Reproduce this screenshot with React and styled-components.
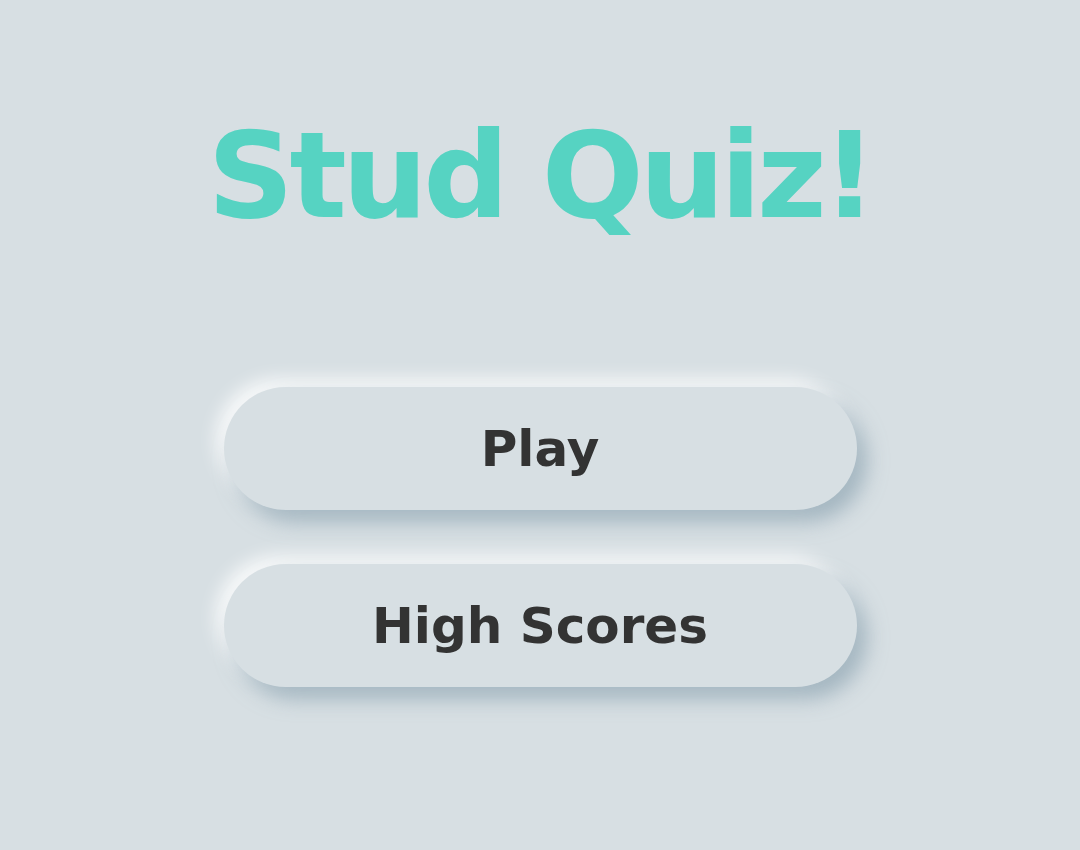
import React from "react";
import styled, { createGlobalStyle } from "styled-components";

const GlobalStyle = createGlobalStyle`
  html, body {
    margin: 0;
    padding: 0;
    background: #d7dfe3;
  }
  body {
    font-family: "DejaVu Sans", "Open Sans", sans-serif;
  }
`;

const Page = styled.div`
  min-height: 850px;
  display: flex;
  flex-direction: column;
  align-items: center;
  background: #d7dfe3;
`;

const Title = styled.h1`
  margin: 106px 0 0;
  font-size: 120px;
  line-height: 140px;
  font-weight: 700;
  color: #56d3c2;
  letter-spacing: -4.5px;
`;

const Menu = styled.div`
  margin-top: 141px;
  display: flex;
  flex-direction: column;
  gap: 54px;
`;

const MenuButton = styled.button`
  width: 633px;
  height: 123px;
  border: none;
  border-radius: 62px;
  background: #d7dfe3;
  color: #333333;
  font-family: "DejaVu Sans", "Open Sans", sans-serif;
  font-size: 50px;
  font-weight: 600;
  box-shadow: 10px 12px 20px rgba(130, 155, 170, 0.6),
    -8px -8px 18px rgba(255, 255, 255, 0.85);
  cursor: pointer;
`;

function App() {
  return (
    <Page>
      <GlobalStyle />
      <Title>Stud Quiz!</Title>
      <Menu>
        <MenuButton>Play</MenuButton>
        <MenuButton>High Scores</MenuButton>
      </Menu>
    </Page>
  );
}

export default App;
